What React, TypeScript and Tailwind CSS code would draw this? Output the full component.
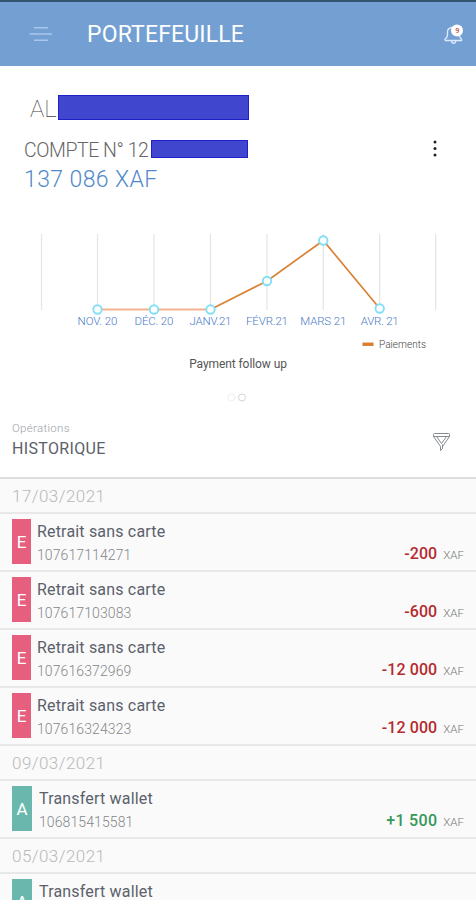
import { clsx } from "clsx";

interface Operation {
  id: string;
  label: string;
  amount: string;
  type: "E" | "A";
}

interface Day {
  date: string;
  operations: Operation[];
}

const days: Day[] = [
  {
    date: "17/03/2021",
    operations: [
      { id: "107617114271", label: "Retrait sans carte", amount: "-200", type: "E" },
      { id: "107617103083", label: "Retrait sans carte", amount: "-600", type: "E" },
      { id: "107616372969", label: "Retrait sans carte", amount: "-12 000", type: "E" },
      { id: "107616324323", label: "Retrait sans carte", amount: "-12 000", type: "E" },
    ],
  },
  {
    date: "09/03/2021",
    operations: [{ id: "106815415581", label: "Transfert wallet", amount: "+1 500", type: "A" }],
  },
  {
    date: "05/03/2021",
    operations: [{ id: "", label: "Transfert wallet", amount: "", type: "A" }],
  },
];

const points = [
  { x: 97.5, y: 79.5, label: "NOV. 20", width: 40 },
  { x: 154, y: 79.5, label: "DÉC. 20", width: 39 },
  { x: 210.5, y: 79.5, label: "JANV.21", width: 42 },
  { x: 267, y: 51, label: "FÉVR.21", width: 42 },
  { x: 323.3, y: 10.5, label: "MARS 21", width: 46 },
  { x: 379.7, y: 78.5, label: "AVR. 21", width: 38 },
];

const gridLines = [41.5, 97.5, 154, 210.5, 267, 323.3, 379.7, 435.7];

function Header() {
  return (
    <header className="h-[66px] border-t-2 border-[#34556f] bg-[#739fd2] flex items-center shrink-0">
      <svg width="24" height="16" viewBox="0 0 24 16" className="ml-[29px]" stroke="#a9c7ec" strokeWidth="1.5">
        <path d="M5 1.700h14M.5 8h22.500M5 14.200h14" />
      </svg>
      <h1 className="ml-[34px] mt-[2px] text-[23px] leading-7 tracking-[0.15px] text-white">PORTEFEUILLE</h1>
      <svg width="20" height="22" viewBox="0 0 20 22" className="ml-auto mr-[12px]" fill="none">
        <path
          d="M1 17.500v-1.500c2-1 2.500-2 2.500-4.500V8.500C3.500 6.500 5.500 5 8 4.500M15.500 12c0 2 .5 3 2 4v1.500H1M7.500 18c.3 3 4 3 4.300 0"
          stroke="#dceaff"
          strokeWidth="1.300"
        />
        <circle cx="13" cy="7.500" r="6" fill="white" />
        <text x="13.300" y="10.200" textAnchor="middle" fontSize="7.500" fontWeight="700" fill="#c96b69">
          9
        </text>
      </svg>
    </header>
  );
}

function Account() {
  return (
    <section className="h-[154px] pt-[29px] pl-6 shrink-0">
      <div className="flex h-[25px] pl-[6px]">
        <span className="w-7 text-[24px] leading-[29px] font-thin text-[#444]">AL</span>
        <span className="w-[191px] bg-[#4046cd] border border-[#2020c8]" />
      </div>
      <div className="flex h-[18px] mt-5">
        <span className="w-[127px] text-[19.500px] leading-[21px] font-light tracking-[-0.45px] text-[#666] whitespace-nowrap">
          COMPTE N° 12
        </span>
        <span className="w-[97px] bg-[#4046cd] border border-[#2020c8]" />
        <svg width="4" height="18" viewBox="0 0 4 18" className="ml-auto mr-[39px]" fill="#222">
          <circle cx="2" cy="2" r="1.500" />
          <circle cx="2" cy="8.500" r="1.500" />
          <circle cx="2" cy="15" r="1.500" />
        </svg>
      </div>
      <p className="mt-[8px] text-[23px] leading-7 tracking-[0.4px] text-[#5089cb] font-light">137 086 XAF</p>
    </section>
  );
}

function Chart() {
  return (
    <section className="h-[190px] shrink-0 flex flex-col items-center">
      <svg width="476" height="134" viewBox="0 -10 476 134" className="block shrink-0 overflow-visible">
        {gridLines.map((x) => (
          <line key={x} x1={x} x2={x} y1="4" y2="80" stroke="#e6e6e6" strokeWidth="1.300" />
        ))}
        <path d="M97.500 79.500H210.500" stroke="#f0b48e" strokeWidth="2" />
        <polyline points="210.500,79.500 267,51 323.300,10.500 379.700,78.500" fill="none" stroke="#d98236" strokeWidth="1.700" />
        {points.map((p) => (
          <g key={p.label}>
            <circle cx={p.x} cy={p.y} r="4.200" fill="white" stroke="#82dff6" strokeWidth="1.900" />
            <text x={p.x} y="95" textAnchor="middle" textLength={p.width} fontSize="11.500" fontWeight="300" fill="#4a7bc8">
              {p.label}
            </text>
          </g>
        ))}
        <rect x="362.500" y="112.500" width="11" height="3.500" fill="#d77f32" />
        <text x="379" y="118" textLength="47" fontSize="10" fontWeight="300" fill="#444">
          Paiements
        </text>
      </svg>
      <p className="mt-[2px] text-[12px] leading-4 tracking-[-0.08px] text-[#555]">Payment follow up</p>
      <svg width="22" height="10" viewBox="0 0 22 10" className="mt-5 -ml-[2px]" fill="none">
        <circle cx="5.500" cy="5.500" r="3.500" stroke="#eee" />
        <circle cx="16" cy="5.500" r="3.500" stroke="#d4d4d4" />
      </svg>
    </section>
  );
}

function HistoryBar() {
  return (
    <section className="h-[69px] px-3 pt-[11px] flex justify-between border-b-2 border-[#dedede] shrink-0">
      <div>
        <p className="text-[11.500px] leading-[14px] tracking-[0.3px] text-[#9a9ea8] font-light">Opérations</p>
        <h2 className="mt-[3px] text-[16px] leading-[21px] tracking-[0.35px] text-[#5b6168]">HISTORIQUE</h2>
      </div>
      <svg width="20" height="20" viewBox="0 0 20 20" className="mt-[11px] mr-[12px]" fill="none" stroke="#858b90" strokeWidth="1">
        <path d="M1.500 2.500c0-.6.500-1 1-1h14c.6 0 1 .4 1 1v2h-16v-2ZM1.500 4.500l7 10M17.500 4.500l-7 10M4.500 4.500l5 7 5-7M8.500 14.500v4l2-2v-4" />
      </svg>
    </section>
  );
}

function OperationRow({ operation }: { operation: Operation }) {
  const outgoing = operation.type === "E";

  return (
    <li className="h-[58px] shrink-0 px-3 pt-[5px] flex border-b-2 border-[#e8e8e8]">
      <span
        className={clsx(
          "h-[45px] flex items-center justify-center text-[17px] text-white shrink-0 pt-[2px]",
          outgoing ? "w-[19px] bg-[#e75f7f]" : "w-5 bg-[#6ab8ad]"
        )}
      >
        {operation.type}
      </span>
      <div className={outgoing ? "ml-[6px]" : "ml-[7px]"}>
        <p className="text-[16px] leading-[22px] tracking-[0.18px] text-[#5b616c] mt-[2px]">{operation.label}</p>
        {operation.id && (
          <p className="text-[14px] leading-[18px] mt-[3px] tracking-[0.1px] font-light text-[#85878a]">{operation.id}</p>
        )}
      </div>
      {operation.amount && (
        <p className="ml-auto mt-[25px] flex items-baseline h-5 leading-5">
          <span
            className={clsx(
              "text-[16px] font-medium",
              outgoing ? "tracking-[0.1px] text-[#b52a2e]" : "tracking-[0.3px] text-[#36975a]"
            )}
          >
            {operation.amount}
          </span>
          <span className="ml-[6px] text-[11.500px] font-light text-[#777]">XAF</span>
        </p>
      )}
    </li>
  );
}

export default function App() {
  return (
    <div className="w-full h-[900px] overflow-hidden bg-white flex flex-col font-[Roboto,sans-serif]">
      <Header />
      <Account />
      <Chart />
      <HistoryBar />
      <main className="flex-1 bg-[#fafafa] overflow-hidden">
        {days.map((day) => (
          <section key={day.date}>
            <h3 className="h-[35px] px-3 text-[17px] leading-[34px] tracking-[0.45px] font-light text-[#b9b9b9] border-b-2 border-[#e8e8e8]">
              {day.date}
            </h3>
            <ul className="flex flex-col">
              {day.operations.map((operation, index) => (
                <OperationRow key={index} operation={operation} />
              ))}
            </ul>
          </section>
        ))}
      </main>
    </div>
  );
}
